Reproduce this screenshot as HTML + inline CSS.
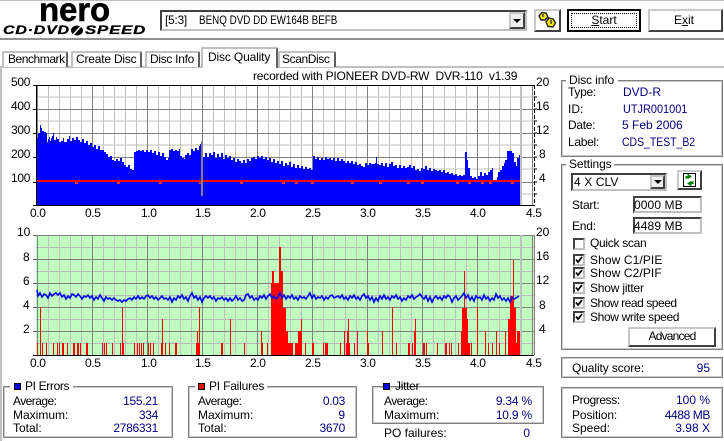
<!DOCTYPE html>
<html><head><meta charset="utf-8"><style>
html,body{margin:0;padding:0;background:#fff}
#r{position:relative;width:724px;height:441px;overflow:hidden;background:#fff;font:12px/14px "Liberation Sans",sans-serif;color:#000}
.t{position:absolute;white-space:nowrap;line-height:14px}
.v{position:absolute;white-space:nowrap;line-height:14px;color:#000080;text-align:right}
.n{position:absolute;white-space:nowrap;line-height:14px;color:#000080;transform-origin:0 0}
.b{position:absolute;box-sizing:border-box}
.tab{position:absolute;box-sizing:border-box;border:2px solid #c0c0c0;border-bottom:0;border-right:2px solid #606060;background:#fff;border-radius:2px 2px 0 0}
.c{position:absolute;left:573px;width:12px;height:12px;box-sizing:border-box;border:2px solid;border-color:#404040 #c0c0c0 #c0c0c0 #404040;background:#fff}
.c svg{position:absolute;left:0;top:0}
.btn{position:absolute;box-sizing:border-box;background:#fff;border:2px solid;border-color:#c8c8c8 #404040 #404040 #c8c8c8;text-align:center}
.in{position:absolute;box-sizing:border-box;background:#fff;border:2px solid;border-color:#404040 #c0c0c0 #c0c0c0 #404040}
.s{position:absolute;width:7px;height:7px;box-sizing:border-box;border:1px solid #000}
.a{letter-spacing:-.55px}
</style></head><body><div id="r">

<div class="b" style="left:0;top:0;width:724px;height:1px;background:#c0c0c0"></div>
<div class="b" style="left:0;top:38px;width:724px;height:2px;background:#909090"></div>
<div class="b" style="left:0;top:66px;width:724px;height:2px;background:#c0c0c0"></div>
<div class="b" style="left:0;top:66px;width:2px;height:375px;background:#c0c0c0"></div>

<!-- logo -->
<div class="t" style="left:39px;top:-7px;font:bold 33px/33px 'Liberation Sans',sans-serif;letter-spacing:-.1px;-webkit-text-stroke:.5px #000">nero</div>
<div class="t" style="left:3px;top:24px;font:italic bold 12px/13px 'Liberation Sans',sans-serif;letter-spacing:.6px;transform-origin:0 0;transform:scaleX(1.33);-webkit-text-stroke:.3px #000">CD·DVD</div>
<svg style="position:absolute;left:69px;top:25px" width="17" height="11"><ellipse cx="8" cy="5.500" rx="6" ry="5" fill="#000"/><path d="M3 11L13 0" stroke="#fff" stroke-width="1.500"/></svg>
<div class="t" style="left:85px;top:24px;font:italic bold 12px/13px 'Liberation Sans',sans-serif;letter-spacing:.6px;transform-origin:0 0;transform:scaleX(1.4);-webkit-text-stroke:.3px #000">SPEED</div>

<!-- drive select -->
<div class="in" style="left:160px;top:10px;width:367px;height:21px"></div>
<div class="t" style="left:165px;top:13px;letter-spacing:-.3px">[5:3]</div>
<div class="t" style="left:199px;top:13px;transform-origin:0 0;transform:scaleX(.82)">BENQ DVD DD EW164B BEFB</div>
<div class="btn" style="left:509px;top:12px;width:16px;height:17px;background:#efefef"><svg width="12" height="13" style="position:absolute;left:0;top:0"><path d="M2 5h8L6 9z" fill="#000"/></svg></div>

<!-- link button -->
<div class="btn" style="left:534px;top:9px;width:27px;height:23px"></div>
<svg style="position:absolute;left:537px;top:11px" width="22" height="19"><path d="M2 5L5 1.500L9 2L11 6L8 9L4 9Z" fill="#f4ea00" stroke="#222" stroke-width="1.400"/><path d="M9 11L12 7L16 8L18.500 12L16 16L11 15.500Z" fill="#f4ea00" stroke="#222" stroke-width="1.400"/><path d="M6 3V6M14 9V13" stroke="#444" stroke-width="1.500"/></svg>

<!-- Start / Exit -->
<div class="b" style="left:567px;top:9px;width:74px;height:23px;background:#fff;border:2px solid #000"><div class="b" style="left:2px;top:2px;right:2px;bottom:2px;border:1px dotted #000"></div></div>
<div class="t" style="left:590px;top:13px;width:28px;text-align:center"><u>S</u>tart</div>
<div class="btn" style="left:648px;top:9px;width:75px;height:23px"></div>
<div class="t" style="left:674px;top:13px">E<u>x</u>it</div>

<!-- tabs -->
<div class="tab" style="left:2px;top:51px;width:66px;height:16px"></div>
<div class="tab" style="left:71px;top:51px;width:71px;height:16px"></div>
<div class="tab" style="left:145px;top:51px;width:55px;height:16px"></div>
<div class="tab" style="left:201px;top:47px;width:77px;height:21px;z-index:2"></div>
<div class="tab" style="left:278px;top:51px;width:58px;height:16px"></div>
<div class="t" style="left:8px;top:52px;letter-spacing:-.45px">Benchmark</div>
<div class="t" style="left:76px;top:52px;letter-spacing:-.2px">Create Disc</div>
<div class="t" style="left:150px;top:52px;letter-spacing:-.3px">Disc Info</div>
<div class="t" style="left:208px;top:50px;z-index:3;letter-spacing:-.15px">Disc Quality</div>
<div class="t" style="left:282px;top:52px;letter-spacing:-.4px">ScanDisc</div>

<div class="t" style="left:253px;top:69px;letter-spacing:-.2px">recorded with PIONEER DVD-RW&nbsp; DVR-110&nbsp; v1.39</div>

<!-- charts -->
<svg style="position:absolute;left:0;top:0" width="724" height="441" shape-rendering="crispEdges">
<defs>
<pattern id="g1" patternUnits="userSpaceOnUse" x="37" y="0" width="55" height="10">
<rect x="11" width="1" height="10" fill="#c0c0c0"/><rect x="22" width="1" height="10" fill="#c0c0c0"/><rect x="33" width="1" height="10" fill="#c0c0c0"/><rect x="44" width="1" height="10" fill="#c0c0c0"/><rect x="0" width="1" height="10" fill="#808080"/>
</pattern>
</defs>
<!-- chart1 -->
<rect x="37" y="85" width="497" height="121" fill="#fff"/>
<path d="M37 97H534M37 121H534M37 145H534M37 169H534M37 194H534" stroke="#c0c0c0" fill="none"/>
<rect x="37" y="85" width="497" height="121" fill="url(#g1)"/>
<path d="M37 109.500H534M37 133.500H534M37 157.500H534M37 182.500H534" stroke="#808080" fill="none"/>
<path fill="#0000ff" d="M37 206V138H38V133H40V125H41V128H42V131H44V132H46V133H47V142H48V139H49V137H50V141H51V138H52V136H53V133H54V140H56V137H57V139H59V142H61V141H63V138H64V142H67V139H69V136H70V141H72V138H74V140H76V137H78V140H80V142H82V139H84V143H86V141H88V145H90V143H92V147H94V145H96V149H98V146H100V150H102V150H104V152H106V154H108V157H110V156H112V160H114V161H116V159H118V161H120V158H122V162H124V165H126V167H128V165H130V169H132V170H134V152H136V151H138V150H140V151H142V150H144V152H146V150H148V152H150V150H152V153H154V151H156V155H158V152H160V156H162V153H164V157H166V160H168V158H169V150H171V149H173V151H175V150H177V151H179V149H180V156H182V158H184V159H185V155H187V153H189V155H191V149H193V151H195V148H197V150H199V146H200V144H203V157H205V153H207V157H209V153H211V155H213V152H215V158H217V154H219V157H221V153H223V159H225V155H227V158H229V156H231V160H233V158H235V162H237V159H239V161H241V163H243V160H245V163H247V159H249V161H251V158H253V157H255V159H257V156H259V158H261V156H263V159H265V157H267V160H269V158H271V162H273V159H275V163H277V161H279V164H281V161H283V166H285V163H287V165H289V162H291V167H293V164H295V168H297V165H299V168H301V166H303V169H305V167H307V169H309V168H311V170H313V156H315V159H317V157H319V160H321V158H323V160H325V157H327V159H329V158H331V160H333V158H335V161H337V158H339V161H341V159H343V161H345V163H347V161H349V163H351V161H353V164H355V162H357V165H359V164H361V166H363V167H365V163H367V165H369V163H371V164H373V164H375V163H376V157H377V164H379V165H381V163H383V166H385V163H387V167H389V164H391V162H393V166H395V165H397V168H399V165H401V168H403V166H405V168H407V167H409V165H411V168H413V166H415V170H417V169H419V171H421V168H423V169H425V166H427V170H429V168H431V171H433V169H435V170H437V171H439V170H441V172H443V170H445V173H447V172H449V174H451V173H453V175H455V174H457V176H459V175H461V176H463V175H465V152H467V160H468V168H470V176H472V178H474V177H476V179H478V176H480V172H482V176H484V173H486V175H488V172H490V170H492V168H493V180H497V177H498V172H500V170H502V166H504V163H505V160H507V151H512V153H514V162H516V166H517V158H519V155H520V206Z"/>
<path d="M37 181H520" stroke="#ff0000" stroke-width="2"/>
<path d="M75 182h3v2h-3zM117 182h3v2h-3zM159 182h3v2h-3zM199 182h3v2h-3zM240 182h3v2h-3zM282 182h3v2h-3zM295 182h3v2h-3zM311 182h3v2h-3zM351 182h3v2h-3zM379 182h3v2h-3zM407 182h3v2h-3zM421 182h3v2h-3zM456 182h3v2h-3zM468 182h3v2h-3zM481 182h3v2h-3zM489 182h3v2h-3zM511 182h3v2h-3z" fill="#ff3030"/>
<rect x="201" y="141" width="2" height="55" fill="#808080"/>
<rect x="520" y="85" width="2" height="121" fill="#c0c0c0"/>
<path d="M33 85.500H534M33 205.500H534" stroke="#000" fill="none"/>
<path d="M36.500 85V206" stroke="#000"/>
<path d="M534.500 85V206" stroke="#000" stroke-dasharray="4 2"/>
<path d="M534 97h3M534 109h3M534 121h3M534 133h3M534 145h3M534 157h3M534 169h3M534 182h3M534 194h3" stroke="#000"/>
<path d="M33 109.500h3M33 133.500h3M33 157.500h3M33 182.500h3" stroke="#000"/>

<!-- chart2 -->
<rect x="36" y="235" width="498" height="120" fill="#c0ffc0"/>
<path d="M36 247.500H534M36 271.500H534M36 295.500H534M36 319.500H534M36 343.500H534" stroke="#b8b8b8" fill="none"/>
<g>
<rect x="37" y="235" width="497" height="120" fill="url(#g1)"/>
</g>
<path d="M36 235.500H534M36 259.500H534M36 283.500H534M36 307.500H534M36 331.500H534" stroke="#808080" fill="none"/>
<rect x="520" y="235" width="2" height="120" fill="#c0c0c0"/>
<path fill="#ff0000" d="M37 343h1v12h-1zM40 307h1v48h-1zM42 343h1v12h-1zM46 343h1v12h-1zM53 343h1v12h-1zM57 343h1v12h-1zM59 343h1v12h-1zM62 343h2v12h-2zM67 343h1v12h-1zM73 343h2v12h-2zM77 343h2v12h-2zM80 343h1v12h-1zM86 343h2v12h-2zM102 343h1v12h-1zM104 343h1v12h-1zM106 343h1v12h-1zM112 343h1v12h-1zM120 343h1v12h-1zM122 307h1v48h-1zM123 343h1v12h-1zM134 343h1v12h-1zM137 343h1v12h-1zM139 343h1v12h-1zM141 343h1v12h-1zM143 343h1v12h-1zM148 343h1v12h-1zM150 343h1v12h-1zM153 343h1v12h-1zM161 343h1v12h-1zM162 319h1v36h-1zM165 343h1v12h-1zM169 343h1v12h-1zM175 343h2v12h-2zM196 343h3v12h-3zM197 331h1v12h-1zM199 307h1v48h-1zM221 343h2v12h-2zM230 319h1v36h-1zM244 343h1v12h-1zM261 331h1v24h-1zM262 343h1v12h-1zM267 343h1v12h-1zM271 283h12v72h-12zM272 271h2v12h-2zM279 247h2v36h-2zM281 271h2v12h-2zM283 308h3v47h-3zM286 331h2v24h-2zM288 343h5v12h-5zM295 343h3v12h-3zM298 331h4v24h-4zM301 319h1v12h-1zM305 343h1v12h-1zM312 343h2v12h-2zM323 343h1v12h-1zM325 343h3v12h-3zM340 343h1v12h-1zM344 331h1v24h-1zM346 343h4v12h-4zM347 331h1v12h-1zM348 319h1v24h-1zM354 343h1v12h-1zM357 331h1v24h-1zM367 331h1v24h-1zM368 343h1v12h-1zM382 331h1v24h-1zM392 307h1v48h-1zM396 343h1v12h-1zM408 343h2v12h-2zM412 343h1v12h-1zM414 331h2v24h-2zM415 319h1v12h-1zM423 343h2v12h-2zM426 343h1v12h-1zM437 343h1v12h-1zM445 343h2v12h-2zM449 343h1v12h-1zM451 343h1v12h-1zM458 343h1v12h-1zM461 331h2v24h-2zM462 308h5v47h-5zM464 271h1v37h-1zM467 319h1v36h-1zM468 343h2v12h-2zM471 343h1v12h-1zM477 307h1v48h-1zM485 331h1v24h-1zM488 343h1v12h-1zM492 343h1v12h-1zM496 331h1v24h-1zM499 343h1v12h-1zM505 331h1v24h-1zM508 319h2v36h-2zM510 296h4v59h-4zM513 260h1v36h-1zM514 308h2v47h-2zM516 343h1v12h-1zM517 331h3v24h-3z"/>
<polyline shape-rendering="auto" fill="none" stroke="#0000ff" stroke-width="1.600" points="37,290 38,296 40,293 42,297 44,294 46,295 48,298 50,293 52,296 54,294 56,293 58,295 60,293 62,297 64,295 66,299 68,296 70,298 72,294 74,295 76,297 78,294 80,296 82,299 84,296 86,297 88,295 90,298 92,296 94,300 96,297 98,299 100,295 102,298 104,301 106,297 108,299 110,298 112,300 114,298 116,300 118,301 120,300 122,302 124,300 126,301 128,299 130,298 132,300 134,297 136,299 138,296 140,299 142,297 144,299 146,296 148,295 150,298 152,296 154,299 156,297 158,300 160,298 162,296 164,299 166,298 168,300 170,297 172,302 174,298 176,300 178,296 180,298 182,295 184,299 186,297 188,301 190,296 192,293 194,298 196,296 198,300 200,297 202,302 204,298 206,296 208,298 210,296 212,299 214,297 216,301 218,298 220,299 222,297 224,300 226,298 228,301 230,298 232,301 234,299 236,296 238,300 240,298 242,301 244,300 246,295 248,294 250,298 252,296 254,300 256,298 258,300 260,296 262,298 264,295 266,299 268,296 270,294 272,298 274,296 276,299 278,297 280,293 282,298 284,295 286,299 288,296 290,298 292,295 294,299 296,297 298,300 300,296 302,298 304,297 306,299 308,296 310,293 312,298 314,295 316,299 318,297 320,298 322,296 324,300 326,297 328,299 330,296 332,295 334,298 336,297 338,296 340,298 342,295 344,299 346,297 348,300 350,296 352,298 354,295 356,299 358,297 360,300 362,296 364,294 366,298 368,296 370,300 372,297 374,302 376,298 378,301 380,296 382,299 384,295 386,299 388,297 390,300 392,296 394,298 396,295 398,299 400,297 402,301 404,298 406,300 408,296 410,298 412,295 414,299 416,297 418,296 420,294 422,297 424,299 426,296 428,301 430,297 432,302 434,298 436,296 438,299 440,297 442,300 444,296 446,298 448,295 450,297 452,302 454,298 456,296 458,300 460,298 462,296 464,293 466,298 468,295 470,300 472,297 474,301 476,296 478,298 480,297 482,300 484,295 486,299 488,297 490,301 492,298 494,300 496,294 498,298 500,296 502,300 504,298 506,301 508,298 510,302 512,297 514,299 516,298 519,296"/>
<path d="M33 355.500H534" stroke="#000"/>
<path d="M534.500 235V355" stroke="#808080"/>
<path d="M33 235.500h3M33 259.500h3M33 283.500h3M33 307.500h3M33 331.500h3" stroke="#606060"/>

<!-- group boxes -->
<g fill="none" stroke="#808080" stroke-width="1">
<rect x="561.500" y="80.500" width="161" height="76"/>
<rect x="561.500" y="164.500" width="161" height="185"/>
<rect x="561.500" y="357.500" width="161" height="20"/>
<rect x="561.500" y="387.500" width="161" height="50"/>
<rect x="3.500" y="386.500" width="169" height="51"/>
<rect x="188.500" y="386.500" width="168" height="51"/>
<rect x="372.500" y="386.500" width="171" height="37"/>
</g>
<g fill="none" stroke="#c8c8c8" stroke-width="1">
<rect x="562.500" y="81.500" width="159" height="74"/>
<rect x="562.500" y="165.500" width="159" height="183"/>
<rect x="562.500" y="358.500" width="159" height="18"/>
<rect x="562.500" y="388.500" width="159" height="48"/>
<rect x="4.500" y="387.500" width="167" height="49"/>
<rect x="189.500" y="387.500" width="166" height="49"/>
<rect x="373.500" y="387.500" width="169" height="35"/>
</g>
<rect x="566" y="78" width="52" height="5" fill="#fff"/>
<rect x="566" y="162" width="48" height="5" fill="#fff"/>
<rect x="10" y="384" width="63" height="5" fill="#fff"/>
<rect x="195" y="384" width="72" height="5" fill="#fff"/>
</svg>

<!-- axis labels chart1 -->
<div class="t" style="left:11px;top:75px;letter-spacing:-.3px">500</div>
<div class="t" style="left:11px;top:99px;letter-spacing:-.3px">400</div>
<div class="t" style="left:11px;top:123px;letter-spacing:-.3px">300</div>
<div class="t" style="left:11px;top:147px;letter-spacing:-.3px">200</div>
<div class="t" style="left:11px;top:171px;letter-spacing:-.3px">100</div>
<div class="t" style="left:536px;top:75px">20</div>
<div class="t" style="left:536px;top:99px">16</div>
<div class="t" style="left:536px;top:123px">12</div>
<div class="t" style="left:539px;top:147px">8</div>
<div class="t" style="left:539px;top:171px">4</div>
<div class="t" style="left:30px;top:206px;letter-spacing:-.4px">0.0</div>
<div class="t" style="left:85px;top:206px;letter-spacing:-.4px">0.5</div>
<div class="t" style="left:141px;top:206px;letter-spacing:-.4px">1.0</div>
<div class="t" style="left:195px;top:206px;letter-spacing:-.4px">1.5</div>
<div class="t" style="left:250px;top:206px;letter-spacing:-.4px">2.0</div>
<div class="t" style="left:305px;top:206px;letter-spacing:-.4px">2.5</div>
<div class="t" style="left:360px;top:206px;letter-spacing:-.4px">3.0</div>
<div class="t" style="left:415px;top:206px;letter-spacing:-.4px">3.5</div>
<div class="t" style="left:470px;top:206px;letter-spacing:-.4px">4.0</div>
<div class="t" style="left:526px;top:206px;letter-spacing:-.4px">4.5</div>
<!-- axis labels chart2 -->
<div class="t" style="left:17px;top:225px">10</div>
<div class="t" style="left:23px;top:250px">8</div>
<div class="t" style="left:23px;top:274px">6</div>
<div class="t" style="left:23px;top:298px">4</div>
<div class="t" style="left:23px;top:322px">2</div>
<div class="t" style="left:536px;top:225px">20</div>
<div class="t" style="left:536px;top:249px">16</div>
<div class="t" style="left:536px;top:273px">12</div>
<div class="t" style="left:539px;top:298px">8</div>
<div class="t" style="left:539px;top:322px">4</div>
<div class="t" style="left:30px;top:356px;letter-spacing:-.4px">0.0</div>
<div class="t" style="left:85px;top:356px;letter-spacing:-.4px">0.5</div>
<div class="t" style="left:141px;top:356px;letter-spacing:-.4px">1.0</div>
<div class="t" style="left:195px;top:356px;letter-spacing:-.4px">1.5</div>
<div class="t" style="left:250px;top:356px;letter-spacing:-.4px">2.0</div>
<div class="t" style="left:305px;top:356px;letter-spacing:-.4px">2.5</div>
<div class="t" style="left:360px;top:356px;letter-spacing:-.4px">3.0</div>
<div class="t" style="left:415px;top:356px;letter-spacing:-.4px">3.5</div>
<div class="t" style="left:470px;top:356px;letter-spacing:-.4px">4.0</div>
<div class="t" style="left:526px;top:356px;letter-spacing:-.4px">4.5</div>

<!-- disc info -->
<div class="t" style="left:569px;top:73px;letter-spacing:-.1px">Disc info</div>
<div class="t" style="left:568px;top:85px;letter-spacing:-.3px">Type:</div>
<div class="t" style="left:568px;top:102px">ID:</div>
<div class="t" style="left:568px;top:118px;letter-spacing:-.3px">Date:</div>
<div class="t" style="left:568px;top:135px;letter-spacing:-.3px">Label:</div>
<div class="n" style="left:623px;top:85px">DVD-R</div>
<div class="n" style="left:623px;top:102px;transform:scaleX(.91)">UTJR001001</div>
<div class="n" style="left:622px;top:118px">5 Feb 2006</div>
<div class="n" style="left:622px;top:135px;transform:scaleX(.87)">CDS_TEST_B2</div>

<!-- settings -->
<div class="t" style="left:569px;top:157px;letter-spacing:-.1px">Settings</div>
<div class="in" style="left:571px;top:173px;width:96px;height:18px"></div>
<div class="t" style="left:574px;top:175px;letter-spacing:.1px">4 X CLV</div>
<div class="btn" style="left:650px;top:175px;width:15px;height:14px;background:#efefef"><svg width="11" height="10" style="position:absolute;left:0;top:0"><path d="M2 3h8L6 7z" fill="#000"/></svg></div>
<div class="btn" style="left:677px;top:170px;width:25px;height:20px"></div>
<svg style="position:absolute;left:683px;top:173px" width="14" height="14"><rect x=".5" y=".5" width="12" height="13" fill="#fff" stroke="#000"/><path d="M3 6V3.500H6M5 1.500L8 3.500L5 5.500Z" fill="#008000" stroke="#008000"/><path d="M10 8V10.500H7M8 8.500L5 10.500L8 12.500Z" fill="#008000" stroke="#008000"/></svg>
<div class="t" style="left:572px;top:198px;letter-spacing:-.2px">Start:</div>
<div class="t" style="left:572px;top:219px;letter-spacing:-.2px">End:</div>
<div class="in" style="left:633px;top:196px;width:69px;height:17px"></div>
<div class="in" style="left:633px;top:217px;width:69px;height:17px"></div>
<div class="t" style="left:634px;top:198px;letter-spacing:.1px">0000 MB</div>
<div class="t" style="left:634px;top:219px;letter-spacing:.1px">4489 MB</div>
<div class="c" style="top:238px"></div>
<div class="t" style="left:590px;top:236px;letter-spacing:-.3px">Quick scan</div>
<div class="c" style="top:254px"><svg width="8" height="8"><path d="M1 3.500L3 6L7 1" fill="none" stroke="#000" stroke-width="1.800"/></svg></div>
<div class="t" style="left:590px;top:253px;letter-spacing:.1px">Show C1/PIE</div>
<div class="c" style="top:267px"><svg width="8" height="8"><path d="M1 3.500L3 6L7 1" fill="none" stroke="#000" stroke-width="1.800"/></svg></div>
<div class="t" style="left:590px;top:266px;letter-spacing:.1px">Show C2/PIF</div>
<div class="c" style="top:282px"><svg width="8" height="8"><path d="M1 3.500L3 6L7 1" fill="none" stroke="#000" stroke-width="1.800"/></svg></div>
<div class="t" style="left:590px;top:281px;letter-spacing:-.2px">Show jitter</div>
<div class="c" style="top:297px"><svg width="8" height="8"><path d="M1 3.500L3 6L7 1" fill="none" stroke="#000" stroke-width="1.800"/></svg></div>
<div class="t" style="left:590px;top:296px;letter-spacing:-.45px">Show read speed</div>
<div class="c" style="top:311px"><svg width="8" height="8"><path d="M1 3.500L3 6L7 1" fill="none" stroke="#000" stroke-width="1.800"/></svg></div>
<div class="t" style="left:590px;top:310px;letter-spacing:-.35px">Show write speed</div>
<div class="btn" style="left:628px;top:327px;width:88px;height:20px;line-height:15px;letter-spacing:-.8px">Advanced</div>

<!-- quality -->
<div class="t" style="left:572px;top:361px;letter-spacing:-.1px">Quality score:</div>
<div class="v" style="right:14px;top:361px">95</div>

<!-- progress -->
<div class="t" style="left:572px;top:393px;letter-spacing:-.4px">Progress:</div>
<div class="t" style="left:572px;top:408px;letter-spacing:-.1px">Position:</div>
<div class="t" style="left:572px;top:421px">Speed:</div>
<div class="v" style="right:14px;top:393px">100 %</div>
<div class="v" style="right:14px;top:408px;letter-spacing:-.4px">4488 MB</div>
<div class="v" style="right:14px;top:421px">3.98 X</div>

<!-- PI Errors -->
<div class="s" style="left:14px;top:383px;background:#0000ff"></div>
<div class="t" style="left:25px;top:379px;letter-spacing:-.35px">PI Errors</div>
<div class="t a" style="left:13px;top:394px">Average:</div>
<div class="t" style="left:13px;top:408px">Maximum:</div>
<div class="t" style="left:13px;top:421px">Total:</div>
<div class="v" style="right:566px;top:394px;letter-spacing:-.3px">155.21</div>
<div class="v" style="right:566px;top:408px;letter-spacing:-.3px">334</div>
<div class="v" style="right:566px;top:421px;letter-spacing:-.3px">2786331</div>

<!-- PI Failures -->
<div class="s" style="left:198px;top:383px;background:#ff0000"></div>
<div class="t" style="left:209px;top:379px;letter-spacing:-.2px">PI Failures</div>
<div class="t a" style="left:198px;top:394px">Average:</div>
<div class="t" style="left:198px;top:408px">Maximum:</div>
<div class="t" style="left:198px;top:421px">Total:</div>
<div class="v" style="right:379px;top:394px;letter-spacing:-.3px">0.03</div>
<div class="v" style="right:379px;top:408px">9</div>
<div class="v" style="right:379px;top:421px;letter-spacing:-.3px">3670</div>

<!-- Jitter -->
<div class="s" style="left:383px;top:383px;background:#0000ff"></div>
<div class="t" style="left:395px;top:379px;letter-spacing:-.3px">Jitter</div>
<div class="t a" style="left:384px;top:394px">Average:</div>
<div class="t" style="left:384px;top:408px">Maximum:</div>
<div class="v" style="right:192px;top:394px;letter-spacing:-.2px">9.34 %</div>
<div class="v" style="right:192px;top:408px;letter-spacing:-.2px">10.9 %</div>
<div class="t" style="left:384px;top:426px">PO failures:</div>
<div class="v" style="right:194px;top:426px">0</div>

</div></body></html>
